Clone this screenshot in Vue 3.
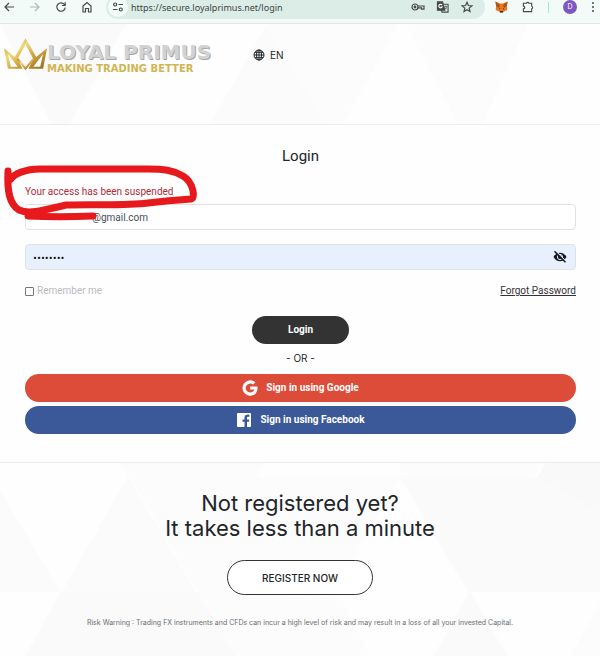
<template>
  <div class="page">
    <!-- browser toolbar -->
    <nav class="toolbar" aria-label="Browser">
      <div class="nav-btns">
        <button type="button" aria-label="Back">
          <svg viewBox="0 0 12 12"><path d="M11 6H2M6 2L2 6l4 4" /></svg>
        </button>
        <button type="button" class="dim" aria-label="Forward">
          <svg viewBox="0 0 12 12"><path d="M1 6h9M6 2l4 4-4 4" /></svg>
        </button>
        <button type="button" aria-label="Reload">
          <svg viewBox="0 0 12 12"><path d="M9.6 3.8A4.2 4.2 0 1 0 10.200 6.500M10.200 1.200v3.300H6.900" /></svg>
        </button>
        <button type="button" aria-label="Home">
          <svg viewBox="0 0 12 12"><path d="M2 5l4-3.500L10 5v6H7.500V7.500h-3V11H2z" /></svg>
        </button>
      </div>
      <div class="address">
        <button type="button" class="site-info" aria-label="Site information">
          <svg viewBox="0 0 12 12">
            <circle cx="3.200" cy="3.500" r="1.500" /><path d="M6.500 3.500H11M1 8.500h4.500" /><circle cx="8.800" cy="8.500" r="1.500" />
          </svg>
        </button>
        <input v-model="url" class="url" type="text" aria-label="Address" />
        <button type="button" aria-label="Passwords">
          <svg class="key" viewBox="0 0 14 12">
            <circle cx="4" cy="6" r="3" /><circle cx="4" cy="6" r=".8" class="fill" />
            <path d="M7 5h6v3.200h-2.500V6.800H7" />
          </svg>
        </button>
        <button type="button" aria-label="Translate">
          <svg class="translate" viewBox="0 0 14 13">
            <path d="M6.500 3.500h6v8.500H6l-1-2" />
            <path d="M1 1h5.500l2.500 9H1z" class="fill" />
            <path d="M6 4.500A1.900 1.900 0 1 0 6 6.500H4.500" class="light" />
            <path d="M8.500 6h3M10 5v1M11 6c-.3 1.500-1 2.500-2 3M9 7l2 2" class="thin" />
          </svg>
        </button>
        <button type="button" aria-label="Bookmark">
          <svg viewBox="0 0 12 12"><path d="M6 1.300l1.400 3.200 3.500.3-2.700 2.300.8 3.400L6 8.700l-3 1.800.8-3.400L1.100 4.800l3.500-.3z" /></svg>
        </button>
      </div>
      <div class="extensions">
        <button type="button" aria-label="Wallet">
          <svg class="fox" viewBox="0 0 13 12">
            <path d="M.5.500l4.500 2h3l4.500-2-.6 4.500.4 4-3.300 1.500L8 11.500H5L4 10.500.7 9l.4-4z" fill="#e8771f" />
            <path d="M.5.500L5 4 4 7 1.100 5zM12.500.500L8 4l1 3 2.900-2z" fill="#a9531c" />
            <path d="M4 7l1.300.8L4 8.500zM9 7l-1.300.8 1.300.7zM5 10h3v1.500H5z" fill="#3b3034" />
          </svg>
        </button>
        <button type="button" aria-label="Extensions">
          <svg viewBox="0 0 13 13"><path d="M1.500 2.500h3.300a1.400 1.400 0 0 1 2.700 0h3v3.200a1.400 1.400 0 0 1 0 2.700v3.100h-9V8.500a1.500 1.500 0 0 0 0-3z" /></svg>
        </button>
        <span class="divider"></span>
        <button type="button" class="avatar" aria-label="Profile">D</button>
        <button type="button" aria-label="Menu">
          <svg class="dots" viewBox="0 0 4 12">
            <circle cx="2" cy="2" r="1" /><circle cx="2" cy="6" r="1" /><circle cx="2" cy="10" r="1" />
          </svg>
        </button>
      </div>
    </nav>

    <header class="header">
      <svg class="pattern" viewBox="0 0 600 100" preserveAspectRatio="xMidYMin slice" aria-hidden="true">
        <path d="M0 0h126L70 100H52z" fill="#fafafa" />
        <path d="M210 100L266 2l60 98z" fill="#fbfbfb" />
        <path d="M266 0h132l-55 100h-17z" fill="#fcfcfc" />
        <path d="M406 0h122l-46 100h-24z" fill="#fcfcfc" />
      </svg>
      <a class="logo" href="#">
        <svg class="crown" viewBox="0 0 44 32" aria-hidden="true">
          <defs>
            <linearGradient id="gold" x1="0" y1="0" x2="1" y2="1">
              <stop offset="0" stop-color="#b98d2c" />
              <stop offset=".35" stop-color="#f0d878" />
              <stop offset=".6" stop-color="#cfa540" />
              <stop offset="1" stop-color="#94691b" />
            </linearGradient>
          </defs>
          <path
            d="M22 0L11 19 0 10l4 21h15L14 21 22 6l8 15-5 10h15l4-21-11 9zM4 16l10 13H7zM40 16l-3 13h-7z"
            fill="url(#gold)" fill-rule="evenodd"
          />
          <path d="M14 21l8 10 8-10" fill="none" stroke="url(#gold)" stroke-width="2" />
        </svg>
        <span class="logo-text">
          <span class="brand">LOYAL PRIMUS</span>
          <span class="tagline">MAKING TRADING BETTER</span>
        </span>
      </a>
      <button type="button" class="lang">
        <svg viewBox="0 0 12 12" aria-hidden="true">
          <circle cx="6" cy="6" r="5" />
          <path d="M6 1v10M1 6h10M2 3.300h8M2 8.700h8" />
          <ellipse cx="6" cy="6" rx="2.500" ry="5" />
        </svg>
        EN
      </button>
    </header>

    <main class="login">
      <h1>Login</h1>
      <form @submit.prevent>
        <p class="error" role="alert">Your access has been suspended</p>
        <input v-model="email" class="field email" type="text" aria-label="Email" />
        <div class="password">
          <input v-model="password" class="field filled" :type="shown ? 'text' : 'password'" aria-label="Password" />
          <button type="button" class="eye" aria-label="Show password" @click="shown = !shown">
            <svg viewBox="0 0 14 12">
              <path d="M.5 6C2 3.200 4.300 1.700 7 1.700S12 3.200 13.500 6C12 8.800 9.700 10.300 7 10.300S2 8.800.5 6z" fill="#16181d" />
              <circle cx="7" cy="6" r="2.600" fill="none" stroke="#e8f0fe" />
              <path d="M2.500-.2l11 11" stroke="#e8f0fe" stroke-width="1.200" />
              <path d="M1.500.300l11 11" stroke="#16181d" stroke-width="1.500" />
            </svg>
          </button>
        </div>
        <div class="options">
          <label><input v-model="remember" type="checkbox" />Remember me</label>
          <a href="#">Forgot Password</a>
        </div>
        <button type="submit" class="pill submit">Login</button>
        <p class="or">- OR -</p>
        <button type="button" class="pill social google">
          <svg viewBox="0 0 16 16" aria-hidden="true">
            <path d="M8.200 6.500v3.100h4.200c-.5 1.700-2 2.900-4.200 2.900a4.500 4.500 0 1 1 2.900-7.900l2.300-2.300A7.700 7.700 0 1 0 8.200 15.700c4.800 0 7.800-3.500 7.300-9.200z" />
          </svg>
          Sign in using Google
        </button>
        <button type="button" class="pill social facebook">
          <svg viewBox="0 0 16 16" aria-hidden="true">
            <path d="M2 1h12a1 1 0 0 1 1 1v12a1 1 0 0 1-1 1h-3V9.800h2l.3-2.300H11V6c0-.8.3-1.200 1.200-1.200h1.200V2.700c-3.300-.5-4.900.8-4.900 3v1.800h-2v2.300h2V15H2a1 1 0 0 1-1-1V2a1 1 0 0 1 1-1z" />
          </svg>
          Sign in using Facebook
        </button>
      </form>
      <!-- red marker strokes over the message -->
      <svg class="marker" viewBox="0 0 200 60" aria-hidden="true">
        <path d="M8 6C7 25 9 39 19 45c11 5 29-1 47-5 28-1 57 1 82-2 17-2 29-3 43-4 5-1 2-17-8-23-10-6-20-7-35-7H40C25 4 14 9 11 14" />
        <path d="M28 51c20 1 42 1 65 0" />
      </svg>
    </main>

    <section class="register">
      <svg class="pattern" viewBox="0 0 600 194" preserveAspectRatio="xMidYMin slice" aria-hidden="true">
        <path d="M120 0h144l-8 14H128zM400 0h142l-8 14H400z" fill="#fcfcfc" />
        <path d="M0 28l60 101H0zM128 14l68 115H62z" fill="#fbfbfb" />
        <path d="M130 14h138l-70 115zM268 14h132l-66 115H198z" fill="#fcfcfc" />
        <path d="M400 14h200v115H468z" fill="#fafafa" />
        <path d="M545 0h55v50l-62-36z" fill="#f9f9f9" />
        <path d="M60 129h138l38 65H25zM470 129l38 65h-75z" fill="#fafafa" />
        <path d="M198 129h140l32 65H236zM600 140v54h-30z" fill="#fcfcfc" />
      </svg>
      <h2>Not registered yet?<br />It takes less than a minute</h2>
      <a class="register-btn" href="#">REGISTER NOW</a>
      <p class="risk">Risk Warning : Trading FX instruments and CFDs can incur a high level of risk and may result in a loss of all your invested Capital.</p>
    </section>
  </div>
</template>

<script setup>
import { ref } from 'vue'

const url = ref('https://secure.loyalprimus.net/login')
const email = ref('@gmail.com')
const password = ref('password')
const shown = ref(false)
const remember = ref(false)
</script>

<style>
body { margin: 0; background: #fefefe; }
</style>

<style scoped>
*, *::before, *::after { box-sizing: border-box; }

.page {
  display: flex;
  flex-direction: column;
  min-height: 100vh;
  font-family: Inter, 'Liberation Sans', sans-serif;
  font-size: 10px;
  line-height: 12px;
  color: #222529;
}

button, input { font: inherit; color: inherit; }
button { padding: 0; border: 0; background: none; cursor: pointer; }
h1, h2, p { margin: 0; font-weight: 400; }

/* ── toolbar ── */
.toolbar {
  display: flex;
  align-items: center;
  height: 24px;
  padding: 0 5px 9px 3px;
  overflow: hidden;
  background: #f3fbf8;
  border-bottom: 1px solid #e3e6e6;
}
.toolbar button { display: flex; flex: none; }
.toolbar svg {
  width: 12px;
  height: 12px;
  fill: none;
  stroke: #454b4a;
  stroke-width: 1.2;
}
.toolbar .dim svg { stroke: #b0b8b6; }
.toolbar .fill, .toolbar .dots { fill: #454b4a; }
.toolbar .light { stroke: #fff; }
.toolbar .thin { stroke-width: .7; }
.toolbar .key, .toolbar .translate { width: 14px; }
.toolbar .fox { width: 13px; stroke: none; }
.toolbar .dots { width: 4px; stroke: none; }
.nav-btns { display: flex; gap: 14px; }
.address {
  display: flex;
  flex: 1;
  align-items: center;
  gap: 11px;
  min-width: 0;
  height: 24px;
  margin-left: 13px;
  padding: 0 12px 0 2px;
  border-radius: 12px;
  background: #dcece7;
}
.toolbar .site-info {
  align-items: center;
  justify-content: center;
  width: 20px;
  height: 20px;
  border-radius: 50%;
  background: #f3fbf8;
}
.url {
  flex: 1;
  min-width: 0;
  height: 16px;
  margin-left: -8px;
  padding: 0;
  border: 0;
  outline: 0;
  background: none;
  font-family: 'Noto Sans', sans-serif;
  font-size: 9px;
  color: #3c4644;
}
.extensions {
  display: flex;
  align-items: center;
  gap: 14px;
  margin-left: 10px;
}
.divider { width: 1px; height: 11px; background: #a5e8dc; }
.toolbar .avatar {
  align-items: center;
  justify-content: center;
  width: 14px;
  height: 14px;
  border-radius: 50%;
  background: #7e57c2;
  color: #fff;
  font-size: 7px;
}

/* ── header ── */
.header, .register { position: relative; isolation: isolate; overflow: hidden; }
.pattern {
  position: absolute;
  inset: 0;
  z-index: -1;
  width: 100%;
  height: 100%;
}
.header {
  display: flex;
  align-items: flex-start;
  gap: 38px;
  height: 101px;
  padding: 14px 4px;
  border-bottom: 1px solid #ececec;
}
.logo { display: flex; align-items: flex-start; text-decoration: none; }
.crown { width: 43px; height: 32px; }
.logo-text {
  display: flex;
  flex-direction: column;
  width: 168px;
  padding-top: 3px;
  font-family: 'DejaVu Sans', sans-serif;
  font-weight: 700;
  white-space: nowrap;
}
.brand {
  font-size: 20px;
  line-height: 22px;
  color: #d2d2d2;
  text-shadow: 1px 1px 0 #a8a8a8;
}
.tagline {
  font-size: 10px;
  line-height: 12px;
  color: #d2b451;
}
.lang { display: flex; align-items: center; gap: 5px; height: 34px; }
.lang svg { width: 12px; height: 12px; fill: none; stroke: #222529; }

/* ── login form ── */
.login { position: relative; padding: 22px 24px 28px 25px; }
h1, .error, .field, .options, .pill { font-family: Roboto, 'Liberation Sans', sans-serif; }
h1 { font-size: 15px; line-height: 18px; text-align: center; }
form { display: flex; flex-direction: column; }
.error { margin-top: 21px; color: #b02a37; }
.field {
  display: block;
  width: 100%;
  height: 26px;
  padding: 0 7px;
  border: 1px solid #dfe1e4;
  border-radius: 4px;
  outline: 0;
  background: #fff;
  color: #495057;
}
.email { margin-top: 6px; padding-left: 66px; }
.password { position: relative; margin-top: 14px; }
.filled { background: #e8f0fe; color: #111; }
.filled[type='password'] { font-family: Inter, sans-serif; font-size: 7px; }
.eye { position: absolute; top: 7px; right: 9px; display: flex; }
.eye svg { width: 14px; height: 12px; }
.options {
  display: flex;
  align-items: center;
  justify-content: space-between;
  margin-top: 15px;
}
.options label { display: flex; align-items: center; gap: 3px; color: #b9bbbe; }
.options input {
  width: 9px;
  height: 9px;
  margin: 0;
  border: 1px solid #767676;
  border-radius: 1px;
  background: #fff;
  appearance: none;
}
.options input:checked { background: #333; }
.options a { color: #333; }
.pill {
  display: flex;
  align-items: center;
  justify-content: center;
  height: 28px;
  border-radius: 14px;
  font-weight: 700;
  color: #fff;
}
.submit { align-self: center; width: 97px; margin-top: 19px; background: #333; }
.or { margin: 8px 0 10px; text-align: center; }
.social { gap: 8px; }
.social svg { width: 16px; height: 16px; fill: #fff; }
.google { background: #dd4b39; }
.facebook { margin-top: 4px; background: #3b5998; }
.marker {
  position: absolute;
  top: 40px;
  left: 0;
  width: 200px;
  height: 60px;
  fill: none;
  stroke: #e8191c;
  stroke-width: 7;
  stroke-linecap: round;
  stroke-linejoin: round;
  pointer-events: none;
}

/* ── register ── */
.register {
  display: flex;
  flex: 1;
  flex-direction: column;
  align-items: center;
  padding: 28px 16px;
  border-top: 1px solid #ececec;
  text-align: center;
}
h2 { font-size: 22px; line-height: 25px; }
.register-btn {
  display: flex;
  align-items: center;
  justify-content: center;
  width: 146px;
  height: 35px;
  margin-top: 19px;
  border: 1px solid #333;
  border-radius: 18px;
  background: #fff;
  color: #222529;
  font-weight: 500;
  text-decoration: none;
}
.risk { margin-top: 22px; font-size: 7px; color: #6b6e72; }
</style>
